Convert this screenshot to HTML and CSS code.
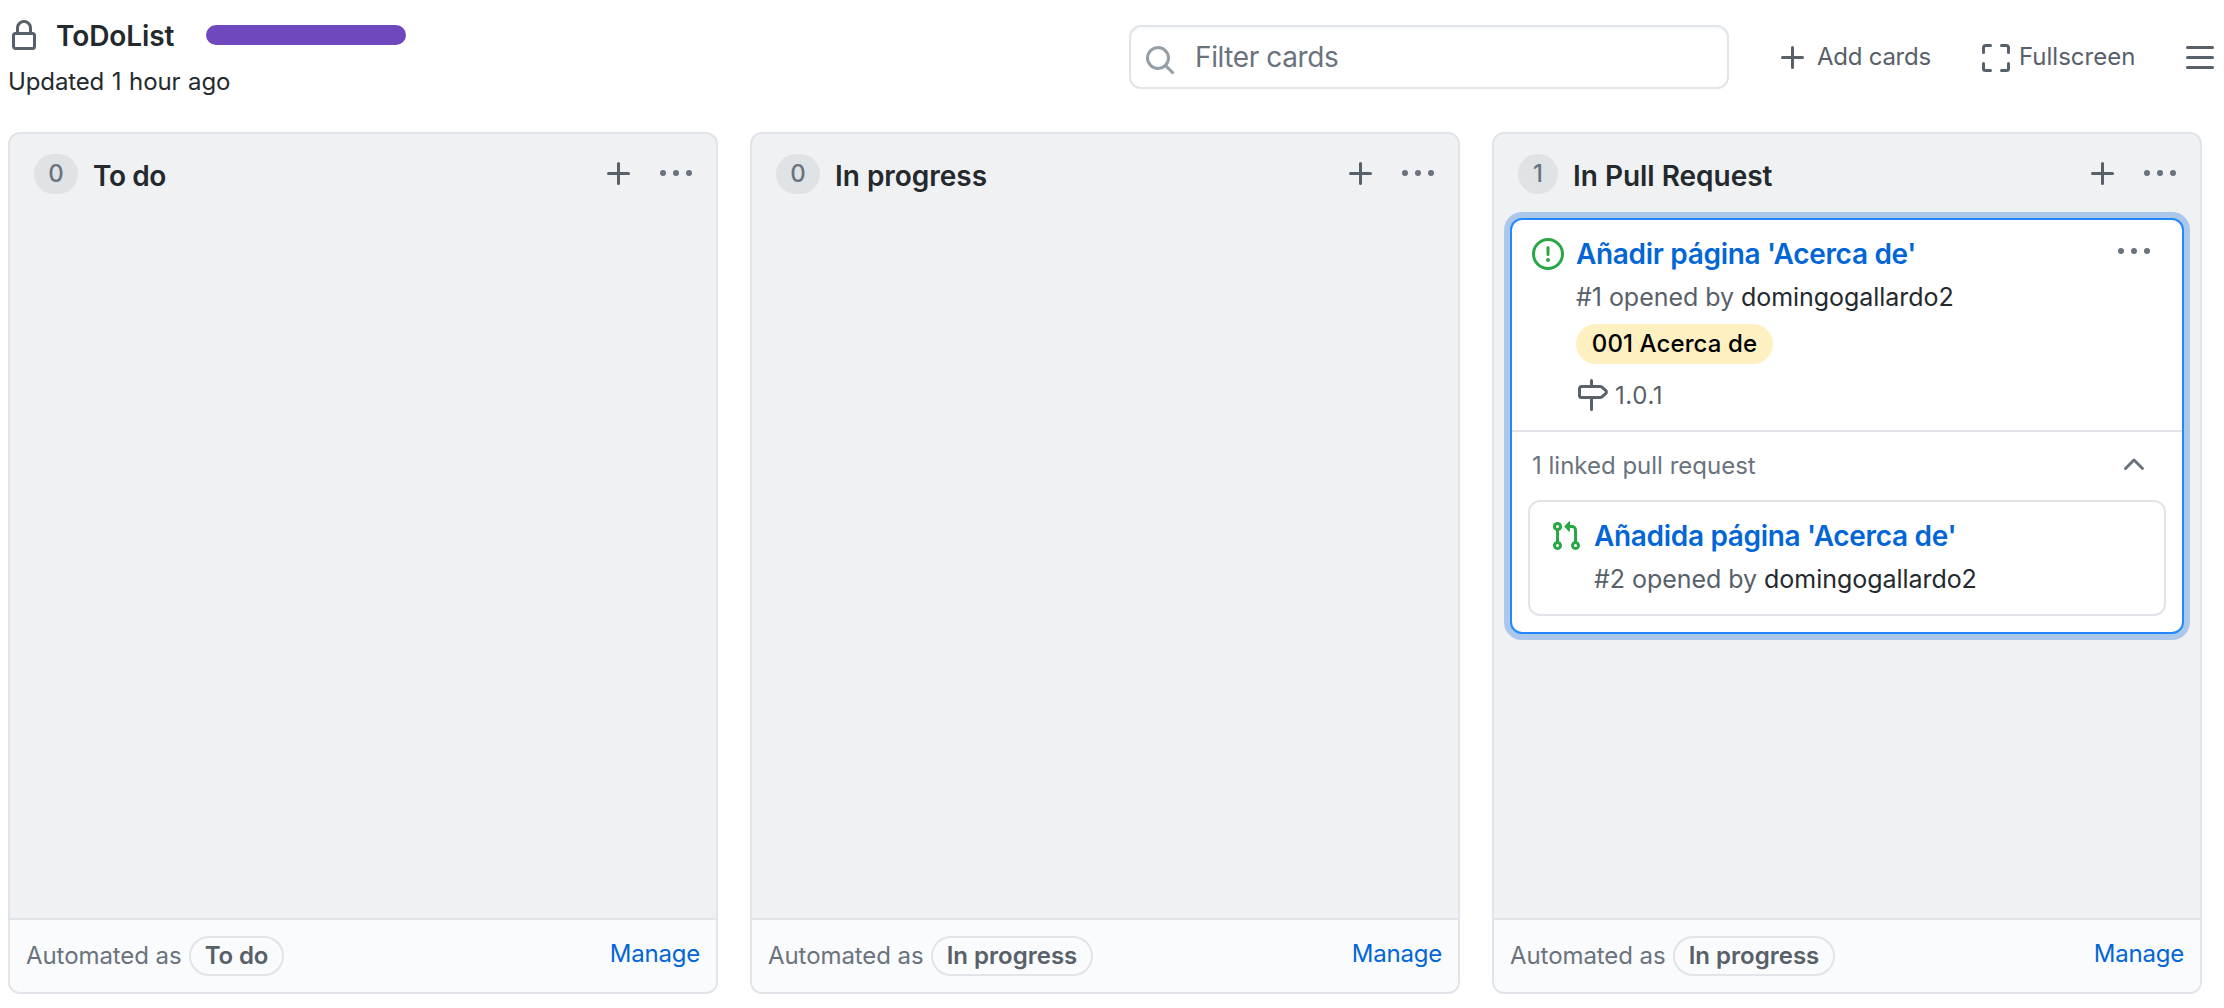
FILE: index.html
```html
<!DOCTYPE html>
<html lang="en">
<head>
<meta charset="utf-8">
<title>ToDoList</title>
<link rel="stylesheet" href="styles.css">
</head>
<body>
<svg class="sprite" aria-hidden="true">
  <symbol id="lock" viewBox="0 0 16 16"><path fill-rule="evenodd" d="M4 4v2h-.25A1.75 1.75 0 002 7.75v5.5c0 .966.784 1.75 1.75 1.75h8.5A1.75 1.75 0 0014 13.25v-5.5A1.75 1.75 0 0012.25 6H12V4a4 4 0 10-8 0zm6.5 2V4a2.5 2.500 0 10-5 0v2h5zM12 7.500h.25a.25.25 0 01.25.25v5.500a.25.25 0 01-.25.25h-8.500a.25.25 0 01-.25-.25v-5.500a.25.25 0 01.25-.25H12z"/></symbol>
  <symbol id="plus" viewBox="0 0 16 16"><path fill-rule="evenodd" d="M7.75 2a.75.75 0 01.75.75V7h4.25a.75.75 0 110 1.500H8.500v4.250a.75.75 0 11-1.500 0V8.500H2.750a.75.75 0 010-1.500H7V2.750A.75.75 0 017.750 2z"/></symbol>
  <symbol id="dots" viewBox="0 0 16 16"><path d="M8 9a1.500 1.500 0 100-3 1.500 1.500 0 000 3zM1.500 9a1.500 1.500 0 100-3 1.500 1.500 0 000 3zm13 0a1.500 1.500 0 100-3 1.500 1.500 0 000 3z"/></symbol>
  <symbol id="search" viewBox="0 0 16 16"><path fill-rule="evenodd" d="M11.500 7a4.499 4.499 0 11-8.998 0A4.499 4.499 0 0111.500 7zm-.82 4.740a6 6 0 111.060-1.060l3.040 3.040a.75.75 0 11-1.060 1.060l-3.040-3.040z"/></symbol>
  <symbol id="full" viewBox="0 0 16 16"><path fill-rule="evenodd" d="M2.750 2.500a.25.25 0 00-.25.25v2.500a.75.75 0 01-1.500 0v-2.500C1 1.784 1.784 1 2.750 1h2.500a.75.75 0 010 1.500h-2.500zM10 1.750a.75.75 0 01.75-.75h2.500c.966 0 1.750.784 1.750 1.750v2.500a.75.75 0 01-1.500 0v-2.500a.25.25 0 00-.25-.25h-2.500a.75.75 0 01-.75-.75zM1.750 10a.75.75 0 01.75.75v2.500c0 .138.112.25.25.25h2.500a.75.75 0 010 1.500h-2.500A1.750 1.750 0 011 13.250v-2.500a.75.75 0 01.75-.75zm12.500 0a.75.75 0 01.75.75v2.500A1.750 1.750 0 0113.250 15h-2.500a.75.75 0 010-1.500h2.500a.25.25 0 00.25-.25v-2.500a.75.75 0 01.75-.75z"/></symbol>
  <symbol id="menu" viewBox="0 0 16 16"><path fill-rule="evenodd" d="M1 2.750A.75.75 0 011.750 2h12.500a.75.75 0 110 1.500H1.750A.75.75 0 011 2.750zm0 5A.75.75 0 011.750 7h12.500a.75.75 0 110 1.500H1.750A.75.75 0 011 7.750zM1.750 12a.75.75 0 100 1.500h12.500a.75.75 0 100-1.500H1.750z"/></symbol>
  <symbol id="issue" viewBox="0 0 16 16"><path fill-rule="evenodd" d="M8 1.500a6.500 6.500 0 100 13 6.500 6.500 0 000-13zM0 8a8 8 0 1116 0A8 8 0 010 8zm9 3a1 1 0 11-2 0 1 1 0 012 0zm-.25-6.250a.75.75 0 00-1.500 0v3.500a.75.75 0 001.500 0v-3.500z"/></symbol>
  <symbol id="milestone" viewBox="0 0 16 16"><path fill-rule="evenodd" d="M7.750 0a.75.75 0 01.75.75V3h3.634c.414 0 .814.147 1.130.414l2.070 1.750a1.750 1.750 0 010 2.672l-2.070 1.750a1.750 1.750 0 01-1.130.414H8.500v5.250a.75.75 0 11-1.500 0V10H2.750A1.750 1.750 0 011 8.250v-3.500C1 3.784 1.784 3 2.750 3H7V.75A.75.75 0 017.750 0zm0 8.500h4.384a.25.25 0 00.161-.06l2.070-1.750a.25.25 0 000-.38l-2.070-1.750a.25.25 0 00-.161-.06H2.750a.25.25 0 00-.25.25v3.500c0 .138.112.25.25.25h5z"/></symbol>
  <symbol id="up" viewBox="0 0 16 16"><path fill-rule="evenodd" d="M3.220 9.780a.75.75 0 010-1.060l4.250-4.250a.75.75 0 011.060 0l4.250 4.250a.75.75 0 01-1.060 1.060L8 6.060 4.280 9.780a.75.75 0 01-1.060 0z"/></symbol>
  <symbol id="pr" viewBox="0 0 16 16"><path fill-rule="evenodd" d="M7.177 3.073L9.573.677A.25.25 0 0110 .854v4.792a.25.25 0 01-.427.177L7.177 3.427a.25.25 0 010-.354zM3.750 2.500a.75.75 0 100 1.500.75.75 0 000-1.500zm-2.250.75a2.250 2.250 0 113 2.122v5.256a2.251 2.251 0 11-1.500 0V5.372A2.250 2.250 0 011.500 3.250zM11 2.500h-1V4h1a1 1 0 011 1v5.628a2.251 2.251 0 101.500 0V5A2.500 2.500 0 0011 2.500zm1 10.250a.75.75 0 111.500 0 .75.75 0 01-1.500 0zM3.750 12a.75.75 0 100 1.500.75.75 0 000-1.500z"/></symbol>
</svg>

<header class="topbar">
  <div class="project">
    <h1 class="project-name"><svg class="icon"><use href="#lock"/></svg><span class="name">ToDoList</span><span class="progress"></span></h1>
    <p class="updated">Updated 1 hour ago</p>
  </div>
  <div class="tools">
    <div class="search"><svg class="icon"><use href="#search"/></svg><span>Filter cards</span></div>
    <div class="tool add"><svg class="icon"><use href="#plus"/></svg><span>Add cards</span></div>
    <div class="tool full"><svg class="icon"><use href="#full"/></svg><span>Fullscreen</span></div>
    <svg class="icon menu"><use href="#menu"/></svg>
  </div>
</header>

<main class="board">
  <section class="column">
    <div class="column-head"><span class="count">0</span><h2 class="tight">To do</h2><svg class="icon"><use href="#plus"/></svg><svg class="icon"><use href="#dots"/></svg></div>
    <div class="cards"></div>
    <div class="column-foot"><span class="auto">Automated as</span><span class="preset">To do</span><a class="manage">Manage</a></div>
  </section>
  <section class="column">
    <div class="column-head"><span class="count">0</span><h2>In progress</h2><svg class="icon"><use href="#plus"/></svg><svg class="icon"><use href="#dots"/></svg></div>
    <div class="cards"></div>
    <div class="column-foot"><span class="auto">Automated as</span><span class="preset wide">In progress</span><a class="manage">Manage</a></div>
  </section>
  <section class="column">
    <div class="column-head"><span class="count narrow">1</span><h2>In Pull Request</h2><svg class="icon"><use href="#plus"/></svg><svg class="icon"><use href="#dots"/></svg></div>
    <div class="cards">
      <article class="card">
        <div class="issue">
          <svg class="icon green"><use href="#issue"/></svg>
          <div class="body">
            <a class="title">Añadir página 'Acerca de'</a>
            <p class="meta">#1 opened by <b>domingogallardo2</b></p>
            <span class="label">001 Acerca de</span>
            <p class="milestone"><svg class="icon"><use href="#milestone"/></svg><span>1.0.1</span></p>
          </div>
          <svg class="icon more"><use href="#dots"/></svg>
        </div>
        <div class="linked">
          <div class="linked-head"><span>1 linked pull request</span><svg class="icon"><use href="#up"/></svg></div>
          <div class="pull">
            <svg class="icon green"><use href="#pr"/></svg>
            <div class="body">
              <a class="title">Añadida página 'Acerca de'</a>
              <p class="meta">#2 opened by <b>domingogallardo2</b></p>
            </div>
          </div>
        </div>
      </article>
    </div>
    <div class="column-foot"><span class="auto">Automated as</span><span class="preset wide">In progress</span><a class="manage">Manage</a></div>
  </section>
</main>
</body>
</html>
```

FILE: styles.css
```css
* { box-sizing: border-box; }
body {
  margin: 0;
  height: 1008px;
  overflow: hidden;
  background: #fff;
  color: #24292e;
  font: 24px/36px Inter, "Liberation Sans", sans-serif;
}
h1, h2, p { margin: 0; }
.sprite { display: none; }
.icon { width: 32px; height: 32px; flex: none; fill: #586069; }
.green { fill: #28a745; }

.topbar { display: flex; justify-content: space-between; height: 132px; padding-left: 8px; }
.project { padding-top: 16px; }
.project-name { display: flex; align-items: center; height: 40px; font-size: 28px; font-weight: 600; }
.project-name .icon { margin-right: 16px; }
.name { width: 118px; letter-spacing: -0.1px; white-space: nowrap; }
.progress { width: 200px; height: 20px; margin: -2px 0 0 32px; border-radius: 10px; background: #6f48be; }
.updated { padding-top: 8px; word-spacing: 1px; letter-spacing: -0.12px; }

.tools { display: flex; align-items: center; height: 64px; margin-top: 25px; color: #586069; padding-right: 8px; }
.search {
  display: flex; align-items: center; width: 600px; height: 64px; padding-left: 13px; margin-right: 48px;
  border: 2px solid #e1e4e8; border-radius: 12px; box-shadow: inset 0 2px 0 rgba(225, 232, 236, 0.3);
  font-size: 28px; letter-spacing: -0.4px; color: #6a737d;
}
.search .icon { fill: #959da5; margin: 6px 19px 0 0; }
.tool { display: flex; align-items: center; }
.tool .icon, .menu { margin-top: 2px; }
.add { width: 203px; letter-spacing: -0.25px; }
.add .icon { margin-right: 8px; }
.full { width: 204px; }
.full .icon { margin-right: 7px; }

.board { display: grid; grid-template-columns: repeat(3, 710px); gap: 32px; padding-left: 8px; height: 862px; }
.column {
  display: flex; flex-direction: column; overflow: hidden;
  border: 2px solid #e1e4e8; border-radius: 12px; background: #eff1f3;
}
.column-head { display: flex; align-items: center; height: 80px; padding: 0 24px; }
.count {
  width: 44px; height: 40px; border-radius: 20px; margin-right: 15px;
  background: #dfe3e6; color: #6a737d; font-weight: 500; line-height: 40px; text-align: center;
}
.count.narrow { width: 40px; }
.column-head h2 { flex: 1; font-size: 28px; font-weight: 600; line-height: 36px; padding-top: 4px; letter-spacing: -0.02px; }
.column-head .tight { letter-spacing: -0.4px; }
.column-head .icon + .icon { margin-left: 25px; fill: #6a737d; }
.cards { flex: 1; padding: 4px 16px; }
.column-foot {
  display: flex; align-items: center; height: 74px; padding: 0 16px;
  border-top: 2px solid #e1e4e8; background: #fafbfc; color: #6a737d;
}
.auto { width: 156px; letter-spacing: -0.08px; white-space: nowrap; }
.preset {
  width: 95px; height: 40px; margin-left: 7px; line-height: 36px; text-align: center; letter-spacing: -0.1px;
  border: 2px solid #e1e4e8; border-radius: 20px; color: #586069; font-weight: 600;
}
.preset.wide { width: 162px; letter-spacing: 0; }
.manage { margin-left: auto; color: #0366d6; padding-bottom: 4px; letter-spacing: -0.2px; }

.card { height: 416px; border: 2px solid #2188ff; border-radius: 12px; background: #fff; box-shadow: 0 0 0 6px #abc8ea; }
.issue { display: flex; height: 212px; padding: 14px 32px 0 20px; border-bottom: 2px solid #e1e4e8; }
.green { margin-top: 4px; }
.body { flex: 1; padding-left: 12px; }
.title { display: block; color: #0366d6; font-size: 28px; font-weight: 600; line-height: 40px; letter-spacing: -0.32px; }
.meta { margin-top: 5px; color: #586069; font-size: 25px; letter-spacing: -0.04px; }
.meta b { color: #24292e; font-weight: 400; }
.label {
  display: block; width: 197px; height: 40px; margin-top: 9px; border-radius: 20px;
  background: #fef0c1; color: #000; font-weight: 500; line-height: 40px; text-align: center; letter-spacing: 0.1px;
}
.milestone { display: flex; align-items: center; margin-top: 12px; color: #586069; }
.milestone .icon { margin-right: 7px; }
.milestone span { padding-top: 2px; letter-spacing: 0.6px; }
.more { margin-top: 2px; }
.issue .more, .linked-head .icon { fill: #6a737d; }
.linked { padding: 0 16px; }
.linked-head { display: flex; justify-content: space-between; align-items: center; height: 68px; padding: 0 16px 0 4px; color: #6a737d; }
.pull { display: flex; height: 116px; padding: 14px 20px; border: 2px solid #e1e4e8; border-radius: 12px; }
```
